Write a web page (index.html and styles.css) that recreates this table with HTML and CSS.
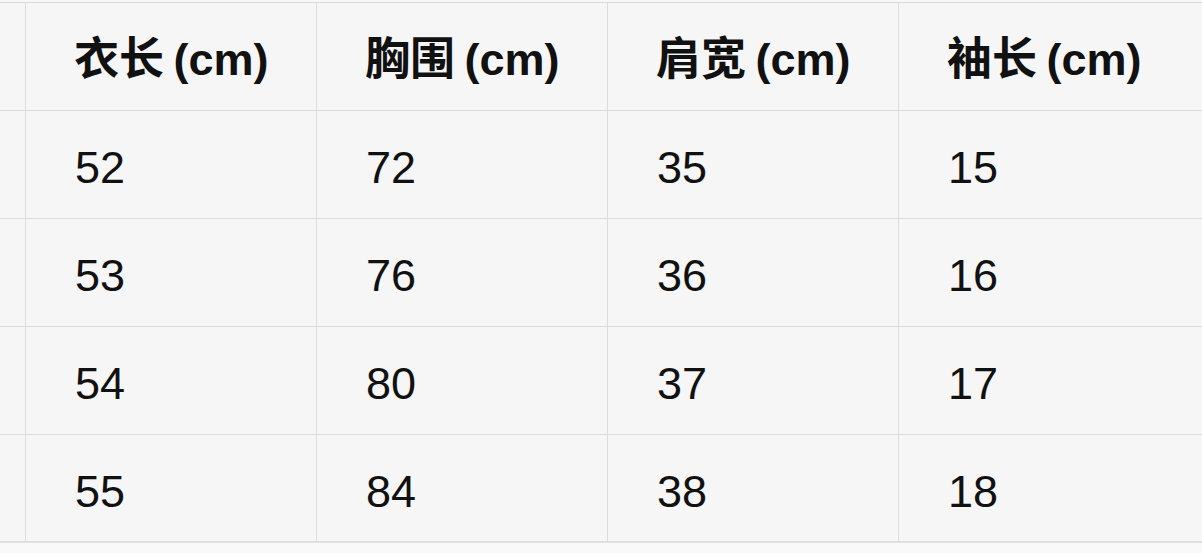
FILE: index.html
```html
<!DOCTYPE html>
<html lang="zh">
<head>
<meta charset="utf-8">
<title>尺码表</title>
<link rel="stylesheet" href="styles.css">
</head>
<body>
<div class="size-table">
  <div class="cell stub"></div>
  <div class="cell head">衣长 (cm)</div>
  <div class="cell head">胸围 (cm)</div>
  <div class="cell head">肩宽 (cm)</div>
  <div class="cell head last">袖长 (cm)</div>

  <div class="cell stub"></div>
  <div class="cell">52</div>
  <div class="cell">72</div>
  <div class="cell">35</div>
  <div class="cell last">15</div>

  <div class="cell stub"></div>
  <div class="cell">53</div>
  <div class="cell">76</div>
  <div class="cell">36</div>
  <div class="cell last">16</div>

  <div class="cell stub"></div>
  <div class="cell">54</div>
  <div class="cell">80</div>
  <div class="cell">37</div>
  <div class="cell last">17</div>

  <div class="cell stub"></div>
  <div class="cell">55</div>
  <div class="cell">84</div>
  <div class="cell">38</div>
  <div class="cell last">18</div>
</div>
</body>
</html>
```
FILE: styles.css
```css
html, body {
  margin: 0;
  padding: 0;
  background: #f9f9f9;
  overflow: hidden;
}

.size-table {
  margin-top: 2px;
  display: grid;
  grid-template-columns: 26px 291px 291px 291px 1fr;
  grid-template-rows: 108px 108px 108px 108px 107px;
  border-top: 1px solid #dadada;
  border-bottom: 1px solid #e2e2e2;
  background: #f6f6f6;
  font-family: "Liberation Sans", "Noto Sans CJK SC", sans-serif;
  font-size: 45px;
  color: #111;
}

.cell {
  box-sizing: border-box;
  border-right: 1px solid #dcdcdc;
  border-bottom: 1px solid #dcdcdc;
  display: flex;
  align-items: center;
  padding: 7px 0 0 49px;
  line-height: 50px;
  white-space: nowrap;
}

.cell.head {
  font-weight: 700;
  word-spacing: -3px;
  padding-left: 48px;
}

.cell.stub {
  padding: 0;
}

.cell.last {
  border-right: none;
}
```
